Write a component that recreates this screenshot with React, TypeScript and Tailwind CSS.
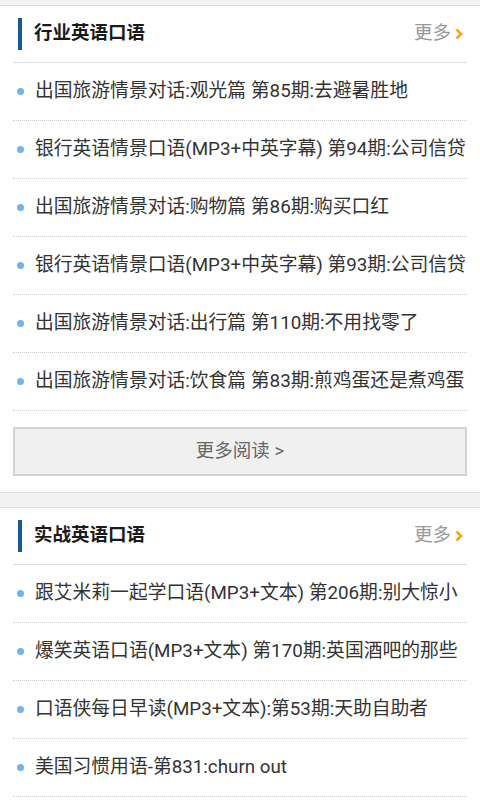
const sections = [
  {
    title: "行业英语口语",
    items: [
      "出国旅游情景对话:观光篇 第85期:去避暑胜地",
      "银行英语情景口语(MP3+中英字幕) 第94期:公司信贷",
      "出国旅游情景对话:购物篇 第86期:购买口红",
      "银行英语情景口语(MP3+中英字幕) 第93期:公司信贷",
      "出国旅游情景对话:出行篇 第110期:不用找零了",
      "出国旅游情景对话:饮食篇 第83期:煎鸡蛋还是煮鸡蛋",
    ],
    more: true,
  },
  {
    title: "实战英语口语",
    items: [
      "跟艾米莉一起学口语(MP3+文本) 第206期:别大惊小",
      "爆笑英语口语(MP3+文本) 第170期:英国酒吧的那些",
      "口语侠每日早读(MP3+文本):第53期:天助自助者",
      "美国习惯用语-第831:churn out",
    ],
    more: false,
  },
];

function Chevron() {
  return (
    <svg width="8" height="12" viewBox="0 0 8 12" className="ml-[4px] mr-[4px]">
      <path d="M1.5 1.5 L6 6 L1.5 10.5" fill="none" stroke="#f5a21c" strokeWidth="2.6" strokeLinejoin="miter" />
    </svg>
  );
}

function Section({ title, items, more }: { title: string; items: string[]; more: boolean }) {
  return (
    <section className="px-[13px]">
      <div className="flex h-[57px] items-center border-b border-[#dedede]">
        <span className="ml-[5px] h-[32px] w-[4px] bg-[#1b5a8e]" />
        <h2 className="ml-[12px] flex-1 text-[18.5px] font-bold text-[#1a1a1a]">{title}</h2>
        <span className="text-[18.5px] text-[#999]">更多</span>
        <Chevron />
      </div>
      <ul>
        {items.map((t) => (
          <li key={t} className="flex h-[58px] items-center border-b border-dotted border-[#cfcfcf]">
            <span className="ml-[4px] h-[7px] w-[7px] shrink-0 rounded-full bg-[#6fb4ea]" />
            <span className="ml-[11px] overflow-hidden whitespace-nowrap text-[18.8px] text-[#333]">{t}</span>
          </li>
        ))}
      </ul>
      {more && (
        <div className="mt-[16px] mb-[16px] flex h-[49px] items-center justify-center border-2 border-[#d2d2d2] bg-[#f0f0f0] text-[18.5px] text-[#666]">
          更多阅读 &gt;
        </div>
      )}
    </section>
  );
}

export default function App() {
  return (
    <div className="h-[800px] overflow-hidden bg-white" style={{ fontFamily: 'Roboto, "Noto Sans CJK SC", sans-serif' }}>
      <div className="h-[6px] border-b border-[#dedede] bg-[#f2f2f2]" />
      <Section {...sections[0]} />
      <div className="h-[16px] border-y border-[#dedede] bg-[#f2f2f2]" />
      <Section {...sections[1]} />
    </div>
  );
}
